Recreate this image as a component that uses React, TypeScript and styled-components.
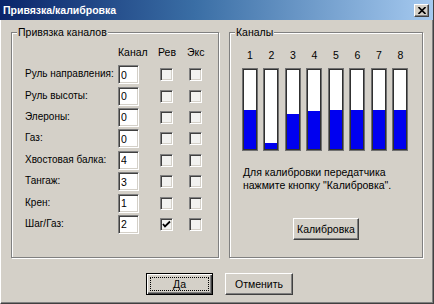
import React from 'react';
import styled, { createGlobalStyle } from 'styled-components';

const Global = createGlobalStyle`
  html, body { margin: 0; padding: 0; background: #d4d0c8; }
  body {
    width: 434px; height: 304px; overflow: hidden;
    font-family: "Liberation Sans", Arial, sans-serif;
    font-size: 10.5px; color: #000;
  }
`;

const Window = styled.div`
  width: 434px;
  height: 304px;
  box-sizing: border-box;
  display: flex;
  flex-direction: column;
  background: #d4d0c8;
  border-left: 1px solid #fff;
  border-right: 1px solid #404040;
  border-bottom: 1px solid #404040;
  box-shadow: inset -1px -1px #808080, inset 1px 0 #d4d0c8;
`;

const TitleBar = styled.div`
  height: 20px;
  flex: none;
  display: flex;
  align-items: center;
  justify-content: space-between;
  padding: 0 4px 0 3px;
  margin-left: -1px;
  background: linear-gradient(to right, #0a246a 0%, #3a6ea5 45%, #a6caf0 100%);
`;

const Title = styled.span`
  color: #fff;
  font-weight: bold;
  font-size: 10.5px;
`;

const CloseButton = styled.div`
  width: 15px;
  height: 13px;
  box-sizing: border-box;
  background: #d4d0c8;
  border: 1px solid;
  border-color: #fff #404040 #404040 #fff;
  box-shadow: inset -1px -1px #808080;
  display: flex;
  align-items: center;
  justify-content: center;
`;

const Body = styled.div`
  flex: 1;
  display: flex;
  flex-direction: column;
  padding: 6px 10px 0 10px;
`;

const Groups = styled.div`
  display: flex;
  gap: 10px;
`;

const Group = styled.fieldset<{ $w: number }>`
  width: ${p => p.$w}px;
  height: 232px;
  box-sizing: border-box;
  margin: 0;
  padding: 0;
  min-width: 0;
  border: 1px solid #808080;
  box-shadow: inset 1px 1px #fff, 1px 1px 0 #fff;
`;

const Legend = styled.legend`
  margin-left: 5px;
  padding: 0 1px;
  line-height: 13px;
  background: #d4d0c8;
`;

const Table = styled.div`
  display: grid;
  grid-template-columns: 93px 42px 29px 13px;
  grid-template-rows: 18px;
  grid-auto-rows: 21.4px;
  align-items: center;
  padding: 7px 0 0 13px;
`;

const Row = styled.div`
  display: contents;
`;

const Head = styled.span<{ $shift?: number }>`
  margin-left: ${p => p.$shift ?? 0}px;
  white-space: nowrap;
  align-self: start;
  line-height: 13px;
`;

const Label = styled.span`
  white-space: nowrap;
  font-size: 10px;
  margin-top: -2px;
`;

const NumField = styled.input`
  width: 21px;
  height: 19px;
  box-sizing: border-box;
  margin: 0;
  padding: 0 2px;
  font: 10.5px "Liberation Sans", Arial, sans-serif;
  background: #fff;
  border: 1px solid;
  border-color: #808080 #fff #fff #808080;
  box-shadow: inset 1px 1px #404040, inset -1px -1px #d4d0c8;
  outline: none;
`;

const Check = styled.span`
  width: 13px;
  height: 13px;
  box-sizing: border-box;
  border: 1px solid;
  border-color: #808080 #fff #fff #808080;
  box-shadow: inset 1px 1px #404040, inset -1px -1px #d4d0c8;
  background: #f2f2f0;
  display: flex;
  align-items: center;
  justify-content: center;
`;

const Channels = styled.div`
  display: flex;
  gap: 5.5px;
  padding: 10px 0 0 12px;
`;

const Channel = styled.div`
  display: flex;
  flex-direction: column;
  align-items: center;
  gap: 6px;
`;

const ChNum = styled.span`
  line-height: 13px;
`;

const Bar = styled.div`
  width: 16px;
  height: 83px;
  box-sizing: border-box;
  border: 1px solid #707070;
  box-shadow: inset 0 0 0 1px #303030;
  background: #fff;
  padding: 1px;
  display: flex;
  flex-direction: column;
  justify-content: flex-end;
`;

const Fill = styled.div`
  background: #0000f0;
  width: 100%;
`;

const Note = styled.p`
  margin: 15px 0 0 13px;
  line-height: 13px;
`;

const Center = styled.div`
  display: flex;
  justify-content: center;
  margin-top: 26px;
`;

const Button = styled.button<{ $w: number; $default?: boolean }>`
  position: relative;
  width: ${p => p.$w}px;
  height: 22px;
  box-sizing: border-box;
  margin: 0;
  padding: 0;
  font: 10.5px "Liberation Sans", Arial, sans-serif;
  color: #000;
  background: #d4d0c8;
  border: 1px solid;
  border-color: ${p => (p.$default ? '#000' : '#fff #404040 #404040 #fff')};
  box-shadow: ${p =>
    p.$default
      ? 'inset 1px 1px #fff, inset -1px -1px #404040, inset -2px -2px #808080'
      : 'inset -1px -1px #808080'};
  &::after {
    content: '';
    display: ${p => (p.$default ? 'block' : 'none')};
    position: absolute;
    inset: 3px;
    border: 1px dotted #000;
  }
`;

const Footer = styled.div`
  display: flex;
  justify-content: center;
  gap: 12px;
  padding-left: 5px;
  margin-top: 15px;
`;

const rows: { label: string; ch: string; rev: boolean }[] = [
  { label: 'Руль направления:', ch: '0', rev: false },
  { label: 'Руль высоты:', ch: '0', rev: false },
  { label: 'Элероны:', ch: '0', rev: false },
  { label: 'Газ:', ch: '0', rev: false },
  { label: 'Хвостовая балка:', ch: '4', rev: false },
  { label: 'Тангаж:', ch: '3', rev: false },
  { label: 'Крен:', ch: '1', rev: false },
  { label: 'Шаг/Газ:', ch: '2', rev: true },
];

const levels = [50, 8, 44, 48, 50, 50, 50, 50];

const CheckMark = () => (
  <svg width="9" height="9" viewBox="0 0 9 9">
    <path d="M1 4 L3 6.5 L8 1.5" fill="none" stroke="#000" strokeWidth="1.8" />
  </svg>
);

const CheckBox = ({ checked }: { checked?: boolean }) => (
  <Check>{checked && <CheckMark />}</Check>
);

export default function App() {
  return (
    <>
      <Global />
      <Window>
        <TitleBar>
          <Title>Привязка/калибровка</Title>
          <CloseButton>
            <svg width="8" height="7" viewBox="0 0 8 7">
              <path d="M0.5 0 L7.5 7 M7.5 0 L0.5 7" stroke="#000" strokeWidth="1.6" />
            </svg>
          </CloseButton>
        </TitleBar>
        <Body>
          <Groups>
            <Group $w={209}>
              <Legend>Привязка каналов</Legend>
              <Table>
                <Row>
                  <span />
                  <Head>Канал</Head>
                  <Head $shift={-2}>Рев</Head>
                  <Head $shift={-2}>Экс</Head>
                </Row>
                {rows.map(r => (
                  <Row key={r.label}>
                    <Label>{r.label}</Label>
                    <NumField readOnly defaultValue={r.ch} />
                    <CheckBox checked={r.rev} />
                    <CheckBox />
                  </Row>
                ))}
              </Table>
            </Group>
            <Group $w={195}>
              <Legend>Каналы</Legend>
              <Channels>
                {levels.map((lv, i) => (
                  <Channel key={i}>
                    <ChNum>{i + 1}</ChNum>
                    <Bar>
                      <Fill style={{ height: `${lv}%` }} />
                    </Bar>
                  </Channel>
                ))}
              </Channels>
              <Note>
                Для калибровки передатчика
                <br />
                нажмите кнопку "Калибровка".
              </Note>
              <Center>
                <Button $w={66}>Калибровка</Button>
              </Center>
            </Group>
          </Groups>
          <Footer>
            <Button $w={67} $default>Да</Button>
            <Button $w={68}>Отменить</Button>
          </Footer>
        </Body>
      </Window>
    </>
  );
}
